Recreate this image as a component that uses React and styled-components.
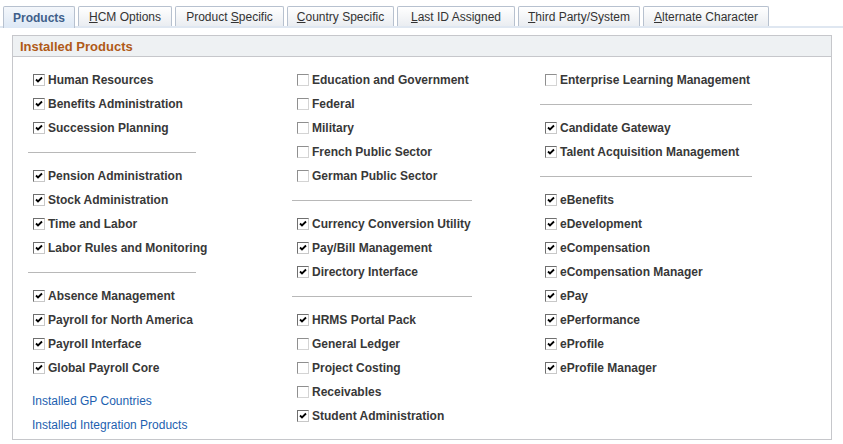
import React from 'react'
import styled, { createGlobalStyle } from 'styled-components'

const GlobalStyle = createGlobalStyle`
  body {
    margin: 0;
    background: #fff;
    font-family: Arial, "Liberation Sans", sans-serif;
  }
`

const Page = styled.div`
  width: 843px;
  height: 444px;
  overflow: hidden;
  background: #fff;
`

const TabStrip = styled.div`
  display: flex;
  align-items: flex-end;
  gap: 3px;
  height: 26px;
  padding-left: 3px;
  border-bottom: 2px solid #dfe7f1;
`

const Tab = styled.div`
  width: ${(p) => p.w}px;
  height: ${(p) => (p.active ? '22px' : '20px')};
  margin-bottom: ${(p) => (p.active ? '-2px' : '0')};
  display: flex;
  align-items: center;
  justify-content: center;
  box-sizing: border-box;
  border: 1px solid #b7c1cf;
  border-bottom: none;
  border-radius: 2px 2px 0 0;
  background: ${(p) =>
    p.active
      ? 'linear-gradient(#f4f7fb, #dde8f5)'
      : 'linear-gradient(#ffffff, #eaedf1)'};
  color: ${(p) => (p.active ? '#3f5f8a' : '#333')};
  font-size: 12px;
  font-weight: ${(p) => (p.active ? 'bold' : 'normal')};
  white-space: nowrap;

  u {
    text-decoration: underline;
  }
`

const GroupBox = styled.div`
  margin: 7px 0 0 12px;
  width: 820px;
  box-sizing: border-box;
  border: 1px solid #c6c7cb;
  border-top: none;
  height: 405px;
`

const GroupHeader = styled.div`
  height: 22px;
  box-sizing: border-box;
  border-top: 1px solid #c6c7cb;
  border-bottom: 1px solid #c6c7cb;
  background: #eef1f3;
  padding-left: 7px;
  display: flex;
  align-items: center;
  color: #b05a18;
  font-size: 13px;
  font-weight: bold;
`

const Columns = styled.div`
  display: grid;
  grid-template-columns: 264px 248px 1fr;
  padding: 11px 0 0 15px;
`

const Column = styled.div`
  display: flex;
  flex-direction: column;
`

const Row = styled.div`
  height: 24px;
  display: flex;
  align-items: center;
  padding-left: 5px;
  gap: 3px;
  color: #383838;
  font-size: 12px;
  font-weight: bold;
  white-space: nowrap;
`

const Box = styled.span`
  width: 12px;
  height: 12px;
  box-sizing: border-box;
  flex: none;
  border: 1px solid;
  border-color: ${(p) =>
    p.checked ? '#6f6f6f #c8c8c8 #c8c8c8 #6f6f6f' : '#8f8f8f #d4d4d4 #d4d4d4 #8f8f8f'};
  background: #fff;
  display: flex;
  align-items: center;
  justify-content: center;
  margin-top: -1px;
`

const Separator = styled.div`
  height: 24px;
  display: flex;
  align-items: center;

  &::after {
    content: '';
    width: ${(p) => p.w}px;
    height: 1px;
    background: #b8b8b8;
  }
`

const LinkRow = styled.a`
  display: flex;
  align-items: center;
  height: 24px;
  padding-left: 4px;
  color: #1d5fb0;
  font-size: 12px;
  text-decoration: none;
  white-space: nowrap;
  margin-top: ${(p) => p.gap || 0}px;
`

const Check = ({ checked }) => (
  <Box checked={checked}>
    {checked && (
      <svg width="8" height="8" viewBox="0 0 8 8">
        <path d="M1 3.5 L3 5.5 L7 1.5" stroke="#000" strokeWidth="1.8" fill="none" />
      </svg>
    )}
  </Box>
)

const col1 = [
  ['Human Resources', 1],
  ['Benefits Administration', 1],
  ['Succession Planning', 1],
  'sep',
  ['Pension Administration', 1],
  ['Stock Administration', 1],
  ['Time and Labor', 1],
  ['Labor Rules and Monitoring', 1],
  'sep',
  ['Absence Management', 1],
  ['Payroll for North America', 1],
  ['Payroll Interface', 1],
  ['Global Payroll Core', 1],
]

const col2 = [
  ['Education and Government', 0],
  ['Federal', 0],
  ['Military', 0],
  ['French Public Sector', 0],
  ['German Public Sector', 0],
  'sep',
  ['Currency Conversion Utility', 1],
  ['Pay/Bill Management', 1],
  ['Directory Interface', 1],
  'sep',
  ['HRMS Portal Pack', 1],
  ['General Ledger', 0],
  ['Project Costing', 0],
  ['Receivables', 0],
  ['Student Administration', 1],
]

const col3 = [
  ['Enterprise Learning Management', 0],
  'sep',
  ['Candidate Gateway', 1],
  ['Talent Acquisition Management', 1],
  'sep',
  ['eBenefits', 1],
  ['eDevelopment', 1],
  ['eCompensation', 1],
  ['eCompensation Manager', 1],
  ['ePay', 1],
  ['ePerformance', 1],
  ['eProfile', 1],
  ['eProfile Manager', 1],
]

const renderItems = (items, sepWidth) =>
  items.map((it, i) =>
    it === 'sep' ? (
      <Separator key={i} w={sepWidth} />
    ) : (
      <Row key={i}>
        <Check checked={!!it[1]} />
        {it[0]}
      </Row>
    )
  )

export default function App() {
  return (
    <Page>
      <GlobalStyle />
      <TabStrip>
        <Tab active w={72}>Products</Tab>
        <Tab w={94}><u>H</u>CM Options</Tab>
        <Tab w={109}>Product&nbsp;<u>S</u>pecific</Tab>
        <Tab w={107}><u>C</u>ountry Specific</Tab>
        <Tab w={118}><u>L</u>ast ID Assigned</Tab>
        <Tab w={122}><u>T</u>hird Party/System</Tab>
        <Tab w={126}><u>A</u>lternate Character</Tab>
      </TabStrip>
      <GroupBox>
        <GroupHeader>Installed Products</GroupHeader>
        <Columns>
          <Column>
            {renderItems(col1, 168)}
            <LinkRow href="#" gap={9}>Installed GP Countries</LinkRow>
            <LinkRow href="#">Installed Integration Products</LinkRow>
          </Column>
          <Column>{renderItems(col2, 180)}</Column>
          <Column>{renderItems(col3, 212)}</Column>
        </Columns>
      </GroupBox>
    </Page>
  )
}
